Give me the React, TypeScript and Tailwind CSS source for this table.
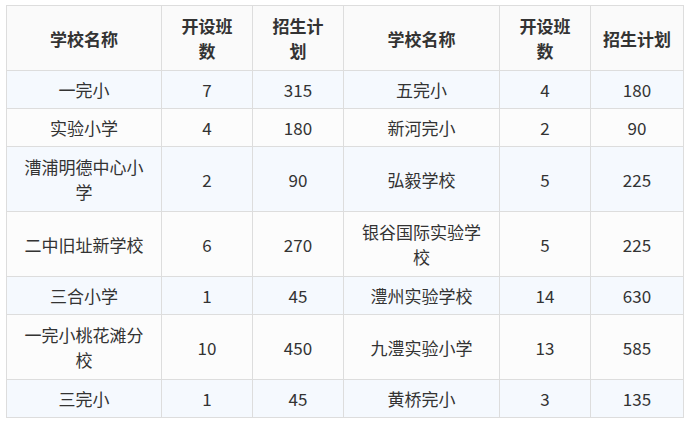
import React from "react";

type Row = { a: React.ReactNode; b: string; c: string; d: React.ReactNode; e: string; f: string; tall?: boolean };

const rows: Row[] = [
  { a: "一完小", b: "7", c: "315", d: "五完小", e: "4", f: "180" },
  { a: "实验小学", b: "4", c: "180", d: "新河完小", e: "2", f: "90" },
  { a: <>漕浦明德中心小<br />学</>, b: "2", c: "90", d: "弘毅学校", e: "5", f: "225", tall: true },
  { a: "二中旧址新学校", b: "6", c: "270", d: <>银谷国际实验学<br />校</>, e: "5", f: "225", tall: true },
  { a: "三合小学", b: "1", c: "45", d: "澧州实验学校", e: "14", f: "630" },
  { a: <>一完小桃花滩分<br />校</>, b: "10", c: "450", d: "九澧实验小学", e: "13", f: "585", tall: true },
  { a: "三完小", b: "1", c: "45", d: "黄桥完小", e: "3", f: "135" },
];

const td = "border border-[#dddddd] text-center align-middle px-[10px] leading-[25px]";

export default function App() {
  return (
    <div className="bg-white w-[690px] h-[425px] pt-[5px] pl-[6px]" style={{ fontFamily: '"Noto Sans CJK SC", "Noto Sans", sans-serif' }}>
      <table className="table-fixed border-collapse w-[677px] text-[17px] text-[#333333]">
        <colgroup>
          <col className="w-[155px]" />
          <col className="w-[91px]" />
          <col className="w-[91px]" />
          <col className="w-[156px]" />
          <col className="w-[91px]" />
          <col className="w-[93px]" />
        </colgroup>
        <thead>
          <tr className="h-[65px] bg-[#fafafa] font-bold">
            <th className={td}>学校名称</th>
            <th className={td}>开设班<br />数</th>
            <th className={td}>招生计<br />划</th>
            <th className={td}>学校名称</th>
            <th className={td}>开设班<br />数</th>
            <th className={td}>招生计划</th>
          </tr>
        </thead>
        <tbody>
          {rows.map((r, i) => (
            <tr key={i} className={`${r.tall ? "h-[65px]" : "h-[38px]"} ${i % 2 === 0 ? "bg-[#f5f9fe]" : "bg-[#fcfcfc]"}`}>
              <td className={td}>{r.a}</td>
              <td className={td}>{r.b}</td>
              <td className={td}>{r.c}</td>
              <td className={td}>{r.d}</td>
              <td className={td}>{r.e}</td>
              <td className={td}>{r.f}</td>
            </tr>
          ))}
        </tbody>
      </table>
    </div>
  );
}
